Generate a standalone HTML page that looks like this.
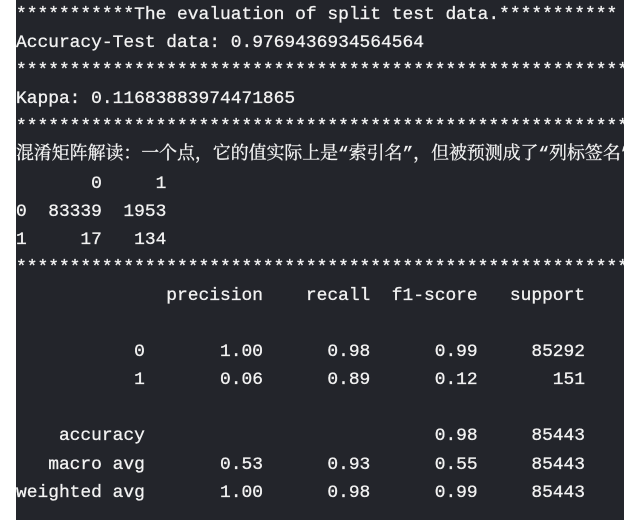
<!DOCTYPE html>
<html><head><meta charset="utf-8"><style>
html,body{margin:0;padding:0;width:624px;height:520px;overflow:hidden;background:#fff;}
.p{position:absolute;left:16px;top:0;width:608px;height:520px;background:#23252b;}
pre{margin:0;padding:0;font-family:"Liberation Mono","Noto Serif CJK SC",monospace;font-size:17.9px;line-height:28.1px;color:#f2f2f2;white-space:pre;position:absolute;left:0;top:1px;-webkit-text-stroke:0.3px #f2f2f2;}
</style></head><body><div class="p"><pre>***********The evaluation of split test data.***********
Accuracy-Test data: 0.9769436934564564
***********************************************************
Kappa: 0.11683883974471865
***********************************************************
混淆矩阵解读：一个点，它的值实际上是“索引名”，但被预测成了“列标签名”
       0     1
0  83339  1953
1     17   134
***********************************************************
              precision    recall  f1-score   support

           0       1.00      0.98      0.99     85292
           1       0.06      0.89      0.12       151

    accuracy                           0.98     85443
   macro avg       0.53      0.93      0.55     85443
weighted avg       1.00      0.98      0.99     85443
</pre></div></body></html>
